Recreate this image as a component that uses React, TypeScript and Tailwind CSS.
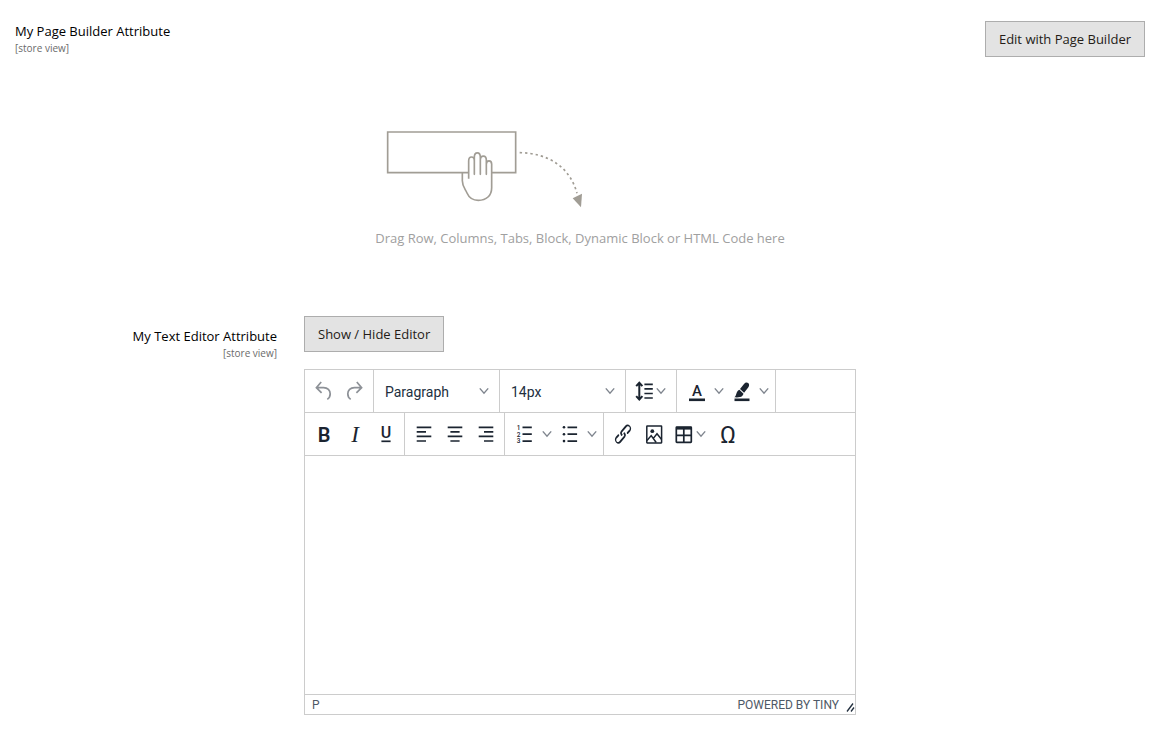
import React from "react";

type Align = "left" | "center" | "right";

const glyphSans = "Roboto, sans-serif";
const glyphSerif = '"Liberation Serif", serif';

function Icon({ children }: { children: React.ReactNode }) {
  return (
    <svg
      className="size-6 shrink-0 overflow-visible"
      viewBox="0 0 24 24"
      fill="none"
      stroke="currentColor"
      strokeWidth="1.7"
      aria-hidden="true"
    >
      {children}
    </svg>
  );
}

function Chevron() {
  return (
    <svg
      className="h-2 w-2.5 shrink-0 text-[#7f858e]"
      viewBox="0 0 10 8"
      fill="none"
      stroke="currentColor"
      strokeWidth="1.4"
      aria-hidden="true"
    >
      <path d="M.8 1.4 5 6.2l4.2-4.8" />
    </svg>
  );
}

function UndoIcon() {
  return (
    <Icon>
      <path d="M10.2 3 5.4 8.6l5.2 5.2M5.8 8.6h6.8c4 0 6.6 2.8 6.6 6.2 0 2.4-1.1 4.4-2.9 5.6" />
    </Icon>
  );
}

function RedoIcon() {
  return (
    <Icon>
      <path d="m13.8 3 4.8 5.6-5.2 5.2M18.2 8.6h-6.8c-4 0-6.6 2.8-6.6 6.2 0 2.4 1.1 4.4 2.9 5.6" />
    </Icon>
  );
}

function LineHeightIcon() {
  return (
    <Icon>
      <path d="M7.3 4v16.4M4.2 7.2l3.1-3.4 3.1 3.4M4.2 17.2l3.1 3.4 3.1-3.4" strokeWidth="2" />
      <path d="M12.4 5.4h8.4M12.4 9.9h8.4M12.4 14.5h8.4M12.4 19h8.4" />
    </Icon>
  );
}

function TextColorIcon() {
  return (
    <Icon>
      <text x="12" y="17" fontSize="15" fontWeight="500" fontFamily={glyphSans} textAnchor="middle" fill="currentColor" stroke="none">
        A
      </text>
      <path d="M4 20.8h16" strokeWidth="2.6" />
    </Icon>
  );
}

function HighlightIcon() {
  return (
    <Icon>
      <path
        d="M4.400 18.300c1.300-1.200 1.600-2.600 2.200-4.400.5-1.500 1.400-2.600 2.800-3.200l4.100 4c-.6 1.800-1.800 2.900-3.500 3.400-1.700.4-3.700.4-5.600.2ZM10 9.900l4-5c1.300-1.500 2.900-1.900 4.200-.8 1.300 1.200 1.200 2.900 0 4.500l-4.100 5.200Z"
        fill="currentColor"
        stroke="none"
      />
      <path d="M4.500 20.800h15" strokeWidth="2.6" />
    </Icon>
  );
}

function LetterIcon({ kind }: { kind: "bold" | "italic" | "underline" | "omega" }) {
  if (kind === "bold")
    return (
      <Icon>
        <text x="12" y="20" fontSize="20" fontWeight="600" fontFamily={glyphSans} textAnchor="middle" fill="currentColor" stroke="none">
          B
        </text>
      </Icon>
    );
  if (kind === "italic")
    return (
      <Icon>
        <text x="12" y="20" fontSize="23" fontStyle="italic" fontFamily={glyphSerif} textAnchor="middle" fill="currentColor" stroke="none">
          I
        </text>
      </Icon>
    );
  if (kind === "underline")
    return (
      <Icon>
        <text x="12" y="16" fontSize="16" fontWeight="500" fontFamily={glyphSans} textAnchor="middle" fill="currentColor" stroke="none">
          U
        </text>
        <path d="M7.400 19.300h9.200" />
      </Icon>
    );
  return (
    <Icon>
      <text x="12" y="21" fontSize="24" fontFamily={glyphSans} textAnchor="middle" fill="currentColor" stroke="none">
        Ω
      </text>
    </Icon>
  );
}

function AlignIcon({ align }: { align: Align }) {
  return (
    <Icon>
      <path d="M4.700 5.300h14.600M4.700 14.300h14.600" />
      {align === "left" && <path d="M4.700 9.900h9.300M4.700 19h9.300" />}
      {align === "center" && <path d="M7.400 9.900h9.200M7.400 19h9.200" />}
      {align === "right" && <path d="M10 9.900h9.300M10 19h9.300" />}
    </Icon>
  );
}

function NumberedListIcon() {
  return (
    <Icon>
      <path d="M9.500 5.300h9.300M9.500 12.200h9.300M9.500 19.100h9.300" />
      <g fontSize="6.500" fontWeight="500" fontFamily={glyphSans} textAnchor="middle" fill="currentColor" stroke="none">
        <text x="5.500" y="7.600">1</text>
        <text x="5.500" y="14.500">2</text>
        <text x="5.500" y="21.400">3</text>
      </g>
    </Icon>
  );
}

function BulletListIcon() {
  return (
    <Icon>
      <path d="M9.500 5.300h9.600M9.500 12.200h9.600M9.500 19.100h9.600" />
      <g fill="currentColor" stroke="none">
        <circle cx="6" cy="5.300" r="1.300" />
        <circle cx="6" cy="12.200" r="1.300" />
        <circle cx="6" cy="19.100" r="1.300" />
      </g>
    </Icon>
  );
}

function LinkIcon() {
  return (
    <Icon>
      <g transform="translate(1.200 -.6) scale(.9 1.06)" fill="currentColor" stroke="none">
        <path d="M6.200 12.300a1 1 0 0 1 1.400 1.400l-2 2a2 2 0 1 0 2.600 2.800l4.800-4.800a1 1 0 0 0 0-1.400 1 1 0 1 1 1.400-1.300 2.900 2.900 0 0 1 0 4L9.600 20a3.900 3.900 0 0 1-5.500-5.500l2-2Zm11.600-.6a1 1 0 0 1-1.400-1.400l2-2a2 2 0 1 0-2.600-2.800L11 10.300a1 1 0 0 0 0 1.400A1 1 0 1 1 9.600 13a2.900 2.900 0 0 1 0-4L14.400 4a3.900 3.900 0 0 1 5.500 5.500l-2 2Z" />
      </g>
    </Icon>
  );
}

function ImageIcon() {
  return (
    <Icon>
      <rect x="4.800" y="4" width="14.800" height="17" rx=".4" strokeWidth="1.500" />
      <circle cx="10.300" cy="9.200" r="1.900" fill="currentColor" stroke="none" />
      <path d="m5 18.500 4.200-4.900 5 6.900M11.300 16.400l3.700-4.600 4.600 5.600" strokeWidth="1.500" />
    </Icon>
  );
}

function TableIcon() {
  return (
    <Icon>
      <rect x="4.300" y="5" width="15" height="15.400" rx=".6" />
      <path d="M4 6.200h15.600" strokeWidth="2.800" />
      <path d="M11.800 7v13.400M4.300 13.300h15" />
    </Icon>
  );
}

function Group({ children, label, className = "px-[3px]" }: { children: React.ReactNode; label: string; className?: string }) {
  return (
    <div role="group" aria-label={label} className={`flex items-center ${className}`}>
      {children}
    </div>
  );
}

function ToolButton({
  label,
  children,
  className = "w-[31px]",
  disabled,
}: {
  label: string;
  children: React.ReactNode;
  className?: string;
  disabled?: boolean;
}) {
  return (
    <button
      type="button"
      aria-label={label}
      disabled={disabled}
      className={`flex h-8 shrink-0 items-center justify-center ${className}`}
    >
      {children}
    </button>
  );
}

function SplitButton({ label, children }: { label: string; children: React.ReactNode }) {
  return (
    <div className="flex items-center">
      <ToolButton label={label}>{children}</ToolButton>
      <ToolButton label={`${label} options`} className="w-3.5">
        <Chevron />
      </ToolButton>
    </div>
  );
}

function ToolSelect({ label, options }: { label: string; options: string[] }) {
  return (
    <div className="grid w-[126px] items-center border-r border-[#ccc]">
      <select
        aria-label={label}
        className="col-start-1 row-start-1 h-8 w-full appearance-none bg-transparent pt-0.5 pr-6 pl-[11px] font-[Roboto,sans-serif] text-sm text-[#222f3e]"
      >
        {options.map((o) => (
          <option key={o}>{o}</option>
        ))}
      </select>
      <span className="pointer-events-none col-start-1 row-start-1 mr-2.5 justify-self-end">
        <Chevron />
      </span>
    </div>
  );
}

function FieldLabel({ htmlFor, children }: { htmlFor: string; children: React.ReactNode }) {
  return (
    <label htmlFor={htmlFor} className="block">
      <span className="block text-[13px] leading-5 font-medium text-black">{children}</span>
      <span className="block text-[10px] leading-3.5 text-[#6b6b6b]">[store view]</span>
    </label>
  );
}

function ActionButton({ children, id }: { children: React.ReactNode; id: string }) {
  return (
    <button
      id={id}
      type="button"
      className="h-9 border border-[#adadad] bg-[#e3e3e3] px-[13px] text-[13px] leading-5 font-medium text-[#241c17]"
    >
      {children}
    </button>
  );
}

function DragIllustration() {
  return (
    <svg
      className="ml-[11px] h-[78px] w-[197px]"
      viewBox="48 30 591 234"
      fill="none"
      stroke="#a19d95"
      strokeWidth="5"
      aria-hidden="true"
    >
      <path d="M296 158H53V36h384v122h-72" />
      <path
        d="M296 176v-53c0-16 17-16 17 0v40-51c0-18 18-18 18 0v51-42c0-17 18-17 18 0v42-30c0-14 16-14 16 0v70c0 24-16 38-40 38-17 0-28-8-34-22-6-13-14-20-14-37v-24"
        strokeLinejoin="round"
      />
      <path d="M449 98c88 2 151 44 172 122" strokeDasharray="7 9" />
      <path d="m608 235 28-14-3 41Z" fill="#a19d95" stroke="none" />
    </svg>
  );
}

function TextEditor() {
  return (
    <div className="mt-[17px] border border-[#ccc] bg-white text-[#1b2430]">
      <div role="toolbar" aria-label="Editor toolbar">
        <div className="flex h-[43px] items-stretch border-b border-[#ccc]">
          <Group label="History" className="border-r border-[#ccc] px-0.5 text-[#8d9197]">
            <ToolButton label="Undo" className="w-8" disabled>
              <UndoIcon />
            </ToolButton>
            <ToolButton label="Redo" className="w-8" disabled>
              <RedoIcon />
            </ToolButton>
          </Group>
          <ToolSelect label="Block format" options={["Paragraph", "Heading 1", "Heading 2", "Heading 3"]} />
          <ToolSelect label="Font size" options={["14px", "16px", "18px", "24px"]} />
          <Group label="Line height" className="border-r border-[#ccc] px-[3px]">
            <ToolButton label="Line height" className="w-11 pr-1">
              <LineHeightIcon />
              <Chevron />
            </ToolButton>
          </Group>
          <Group label="Colors" className="border-r border-[#ccc] px-1">
            <SplitButton label="Text color">
              <TextColorIcon />
            </SplitButton>
            <SplitButton label="Background color">
              <HighlightIcon />
            </SplitButton>
          </Group>
        </div>
        <div className="flex h-[43px] items-stretch border-b border-[#ccc]">
          <Group label="Formatting" className="border-r border-[#ccc] px-[3px]">
            <ToolButton label="Bold">
              <LetterIcon kind="bold" />
            </ToolButton>
            <ToolButton label="Italic">
              <LetterIcon kind="italic" />
            </ToolButton>
            <ToolButton label="Underline">
              <LetterIcon kind="underline" />
            </ToolButton>
          </Group>
          <Group label="Alignment" className="border-r border-[#ccc] px-[3px]">
            <ToolButton label="Align left">
              <AlignIcon align="left" />
            </ToolButton>
            <ToolButton label="Align center">
              <AlignIcon align="center" />
            </ToolButton>
            <ToolButton label="Align right">
              <AlignIcon align="right" />
            </ToolButton>
          </Group>
          <Group label="Lists" className="border-r border-[#ccc] px-1">
            <SplitButton label="Numbered list">
              <NumberedListIcon />
            </SplitButton>
            <SplitButton label="Bullet list">
              <BulletListIcon />
            </SplitButton>
          </Group>
          <Group label="Insert">
            <ToolButton label="Insert link">
              <LinkIcon />
            </ToolButton>
            <ToolButton label="Insert image">
              <ImageIcon />
            </ToolButton>
            <ToolButton label="Table" className="w-[43px] pr-1">
              <TableIcon />
              <Chevron />
            </ToolButton>
            <ToolButton label="Special character">
              <LetterIcon kind="omega" />
            </ToolButton>
          </Group>
        </div>
      </div>
      <textarea
        aria-label="Rich text area"
        className="block h-[238px] w-full resize-none p-3 text-sm outline-none"
      />
      <div className="flex h-5 items-center border-t border-[#ccc] pl-[7px] font-[Roboto,sans-serif] text-xs text-[#4e5966]">
        <span>P</span>
        <a href="#tiny" className="ml-auto">
          POWERED BY TINY
        </a>
        <svg
          className="ml-1.5 h-4 w-2.5 self-end text-[#222f3e]"
          viewBox="0 0 10 16"
          fill="none"
          stroke="currentColor"
          strokeWidth="1.300"
          aria-hidden="true"
        >
          <path d="M2 13.500 8 5.500M6 13.500l3-4" />
        </svg>
      </div>
    </div>
  );
}

export default function App() {
  return (
    <main className="bg-white pt-[21px] pb-8 font-['Open_Sans',sans-serif]">
      <section>
        <div className="flex items-start justify-between px-[15px]">
          <FieldLabel htmlFor="page-builder-edit">My Page Builder Attribute</FieldLabel>
          <ActionButton id="page-builder-edit">Edit with Page Builder</ActionButton>
        </div>
        <div className="mx-auto mt-[73px] w-fit">
          <DragIllustration />
          <p className="mt-5 text-[13px] leading-5 text-[#a0a0a0]">
            Drag Row, Columns, Tabs, Block, Dynamic Block or HTML Code here
          </p>
        </div>
      </section>
      <section className="mt-[68px] grid grid-cols-[277fr_552fr_277fr] gap-x-[27px]">
        <div className="pt-2.5 text-right">
          <FieldLabel htmlFor="toggle-editor">My Text Editor Attribute</FieldLabel>
        </div>
        <div>
          <ActionButton id="toggle-editor">Show / Hide Editor</ActionButton>
          <TextEditor />
        </div>
      </section>
    </main>
  );
}
